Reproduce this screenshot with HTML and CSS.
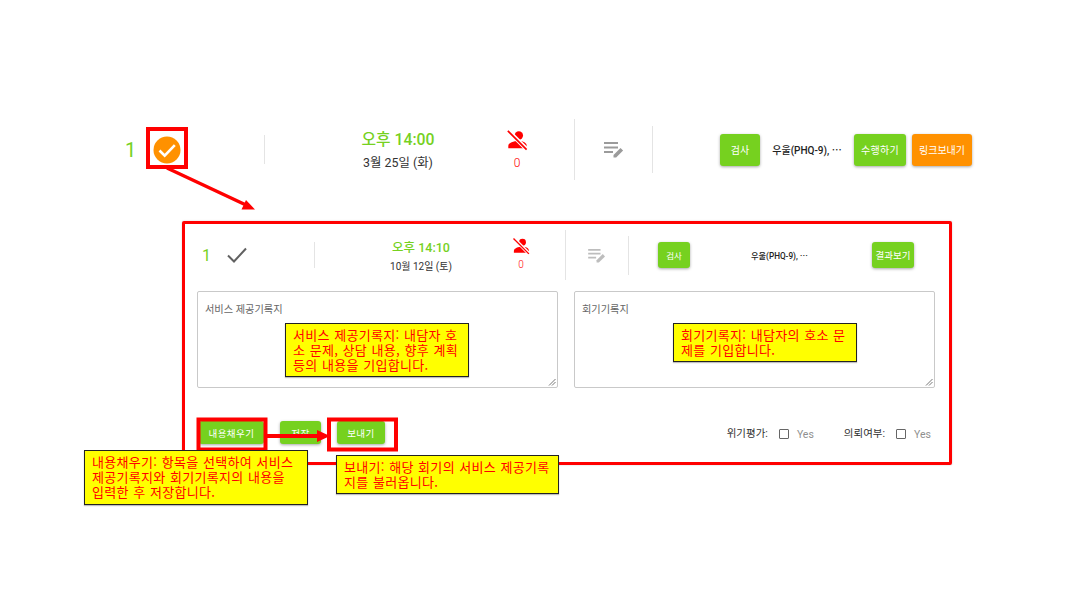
FILE: index.html
```html
<!DOCTYPE html>
<html lang="ko">
<head>
<meta charset="utf-8">
<title>회기 기록</title>
<link rel="stylesheet" href="styles.css">
</head>
<body>
<main class="slide">
  <section class="row row-top">
    <div class="cell-id">
      <span class="num">1</span>
      <svg class="status-icon" viewBox="0 0 28 28"><circle cx="14" cy="14" r="13.5" fill="#ff9100"/><path d="M6.5 14.5l5.2 5.2L21.8 9.2" fill="none" stroke="#fff" stroke-width="2.6"/></svg>
    </div>
    <div class="rule rule-short"></div>
    <div class="cell-time">
      <div class="when"><div class="time">오후 14:00</div><div class="date">3월 25일 (화)</div></div>
      <div class="absent">
        <svg class="absent-icon" viewBox="0 0 24 24"><circle cx="14" cy="7" r="4.6" fill="#f00"/><path d="M2.5 21v-2.5c0-3.6 6-5.5 11-5.5 5.5 0 9 2 9 5v3z" fill="#f00"/><path d="M2 1.500l20.500 20.500" stroke="#fff" stroke-width="4.500"/><path d="M2 2l20.500 20.500" stroke="#f00" stroke-width="1.800"/></svg>
        <div class="count">0</div>
      </div>
    </div>
    <div class="rule rule-tall"></div>
    <div class="cell-note">
      <svg class="note-icon" viewBox="0 0 20 17"><path d="M0 1h14v2H0zM0 5.500h14v2H0zM0 10h9v2H0z" fill="#9b9b9b"/><path d="M9.500 16.500v-2.600l7-7 2.600 2.600-7 7z" fill="#9b9b9b"/></svg>
    </div>
    <div class="rule rule-mid"></div>
    <div class="cell-actions">
      <button class="btn btn-test">검사</button>
      <span class="tests">우울(PHQ-9), ⋯</span>
      <button class="btn btn-run">수행하기</button>
      <button class="btn btn-link">링크보내기</button>
    </div>
  </section>

  <section class="card">
    <div class="row row-inner">
      <div class="cell-id">
        <span class="num">1</span>
        <svg class="plain-check" viewBox="0 0 20 16"><path d="M1 8.500l6 6L19 1.500" fill="none" stroke="#616161" stroke-width="2"/></svg>
      </div>
      <div class="rule rule-short"></div>
      <div class="cell-time">
        <div class="when"><div class="time">오후 14:10</div><div class="date">10월 12일 (토)</div></div>
        <div class="absent">
          <svg class="absent-icon" viewBox="0 0 24 24"><circle cx="14" cy="7" r="4.600" fill="#f00"/><path d="M2.500 21v-2.500c0-3.600 6-5.500 11-5.500 5.500 0 9 2 9 5v3z" fill="#f00"/><path d="M2 1.500l20.500 20.500" stroke="#fff" stroke-width="4.500"/><path d="M2 2l20.500 20.500" stroke="#f00" stroke-width="1.800"/></svg>
          <div class="count">0</div>
        </div>
      </div>
      <div class="rule rule-tall"></div>
      <div class="cell-note">
        <svg class="note-icon" viewBox="0 0 20 17"><path d="M0 1h14v2H0zM0 5.500h14v2H0zM0 10h9v2H0z" fill="#bdbdbd"/><path d="M9.500 16.500v-2.600l7-7 2.600 2.600-7 7z" fill="#bdbdbd"/></svg>
      </div>
      <div class="rule rule-mid"></div>
      <div class="cell-actions">
        <button class="btn btn-test">검사</button>
        <span class="tests">우울(PHQ-9), ⋯</span>
        <button class="btn btn-result">결과보기</button>
      </div>
    </div>

    <div class="records">
      <div class="record"><span class="record-label">서비스 제공기록지</span><svg class="grip" viewBox="0 0 8 8"><path d="M1 7.500L7.500 1M4 7.500L7.500 4" stroke="#777" fill="none"/></svg></div>
      <div class="record"><span class="record-label">회기기록지</span><svg class="grip" viewBox="0 0 8 8"><path d="M1 7.500L7.500 1M4 7.500L7.500 4" stroke="#777" fill="none"/></svg></div>
    </div>

    <div class="footer">
      <div class="footer-btns">
        <button class="btn btn-fill">내용채우기</button>
        <button class="btn btn-save">저장</button>
        <button class="btn btn-send">보내기</button>
      </div>
      <div class="footer-checks">
        <span class="check-label">위기평가:</span><span class="box"></span><span class="yes">Yes</span>
        <span class="check-label check-second">의뢰여부:</span><span class="box"></span><span class="yes">Yes</span>
      </div>
    </div>
  </section>

  <svg class="marks" viewBox="0 0 1080 608">
    <g fill="none" stroke="#f00" stroke-width="4">
      <rect x="148" y="129" width="38" height="38"/>
      <rect x="198.500" y="419.500" width="67" height="30"/>
      <rect x="329" y="419.500" width="67" height="30"/>
    </g>
    <path d="M167 168L246 205" stroke="#f00" stroke-width="3.500"/>
    <path d="M255 209.500L241.500 209.500L246 200z" fill="#f00"/>
    <path d="M267 436H320" stroke="#f00" stroke-width="4"/>
    <path d="M330 436L317 430V442z" fill="#f00"/>
  </svg>

  <p class="note note-service">서비스 제공기록지: 내담자 호소 문제, 상담 내용, 향후 계획 등의 내용을 기입합니다.</p>
  <p class="note note-session">회기기록지: 내담자의 호소 문제를 기입합니다.</p>
  <p class="note note-fill">내용채우기: 항목을 선택하여 서비스 제공기록지와 회기기록지의 내용을 입력한 후 저장합니다.</p>
  <p class="note note-send">보내기: 해당 회기의 서비스 제공기록지를 불러옵니다.</p>
</main>
</body>
</html>
```
FILE: styles.css
```css
* { box-sizing: border-box; }
html, body { margin: 0; padding: 0; background: #fff; }
body { font-family: "Roboto", "Noto Sans CJK KR", sans-serif; }
.slide { position: relative; width: 1080px; height: 608px; padding-top: 119px; overflow: hidden; }

.row { display: flex; align-items: center; }
.row-top { height: 61px; margin-left: 125px; margin-bottom: 41px; }
.row-inner { height: 50px; margin-left: 18px; margin-top: 6px; }

.rule { flex: none; width: 1px; background: #e4e4e4; }

.cell-id { display: flex; align-items: center; flex: none; }
.num { color: #76d11f; }
.cell-time { display: flex; align-items: center; flex: none; }
.when { text-align: center; flex: none; }
.absent { text-align: center; flex: none; }
.time { color: #76d11f; font-weight: 500; }
.date { color: #333; }
.count { color: #f00; font-weight: 300; }
.absent-icon { display: block; margin: 0 auto; }
.cell-note { display: flex; justify-content: center; align-items: center; flex: none; }
.note-icon { display: block; }
.cell-actions { display: flex; align-items: center; flex: none; }
.tests { display: block; color: #222; font-weight: 500; text-align: center; flex: none; white-space: nowrap; }

.btn {
  display: block; flex: none; border: 0; padding: 0; border-radius: 3px; color: #fff;
  background: #76d11f; font-family: inherit; white-space: nowrap;
  box-shadow: 0 1px 3px rgba(0,0,0,.35);
}

/* top row */
.row-top .cell-id { width: 139px; }
.row-top .num { width: 28px; font-size: 20px; }
.status-icon { width: 28px; height: 28px; display: block; }
.row-top .rule-short { height: 29px; }
.row-top .rule-tall { height: 61px; }
.row-top .rule-mid { height: 47px; }
.row-top .cell-time { width: 309px; padding-left: 33px; }
.row-top .when { width: 200px; padding-top: 4px; }
.row-top .time { font-size: 15.800px; line-height: 22px; }
.row-top .date { font-size: 12.400px; line-height: 22px; margin-top: 1px; }
.row-top .absent { width: 24px; margin-left: 7px; padding-top: 2px; }
.row-top .absent-icon { width: 22px; height: 22px; }
.row-top .count { font-size: 12px; line-height: 20px; margin-top: 2px; }
.row-top .cell-note { width: 77px; }
.row-top .note-icon { width: 20px; height: 17px; }
.row-top .cell-actions { padding-left: 67px; }
.row-top .btn { height: 32px; font-size: 10px; }
.row-top .btn-test { width: 40px; }
.row-top .tests { width: 94px; font-size: 10px; }
.btn-run { width: 52px; letter-spacing: .3px; }
.btn-link { width: 60px; margin-left: 6px; background: #ff9100; }

/* card */
.card { width: 770px; height: 244px; margin-left: 182px; border: 3px solid #f00; border-radius: 2px; background: #fff; box-shadow: 0 0 2px rgba(0,0,0,.2); }
.row-inner .cell-id { width: 111px; }
.row-inner .num { width: 24px; font-size: 16px; margin-left: -1px; margin-right: 1px; }
.plain-check { width: 20px; height: 16px; display: block; }
.row-inner .rule-short { height: 26px; }
.row-inner .rule-tall { height: 50px; }
.row-inner .rule-mid { height: 39px; }
.row-inner .cell-time { width: 250px; padding-left: 26px; }
.row-inner .when { width: 160px; padding-top: 3px; }
.row-inner .time { font-size: 12.500px; line-height: 18px; }
.row-inner .date { font-size: 10px; line-height: 16px; margin-top: 2px; }
.row-inner .absent { width: 18px; margin-left: 11px; }
.row-inner .absent-icon { width: 18px; height: 18px; }
.row-inner .count { font-size: 10px; line-height: 16px; margin-top: 2px; }
.row-inner .cell-note { width: 62px; }
.row-inner .note-icon { width: 18px; height: 15px; }
.row-inner .cell-actions { padding-left: 29px; }
.row-inner .btn { height: 26px; font-size: 8.500px; }
.row-inner .btn-test { width: 32px; }
.row-inner .tests { width: 179px; font-size: 8.200px; margin-right: 3px; }
.row-inner .btn-result { width: 42px; font-size: 9.500px; }

.records { display: flex; gap: 16px; margin: 11px 0 0 12px; }
.record { position: relative; width: 361px; height: 97px; padding: 11px 7px; border: 1px solid #c9c9c9; border-radius: 2px; background: #fff; }
.record-label { font-size: 10.200px; line-height: 14px; color: #666; display: block; }
.grip { position: absolute; right: 1px; bottom: 1px; width: 8px; height: 8px; }

.footer { display: flex; align-items: center; margin: 33px 0 0 14px; height: 23px; }
.footer-btns { display: flex; gap: 16px; }
.footer .btn { height: 23px; font-size: 9.500px; letter-spacing: .5px; }
.btn-fill { width: 65px; }
.btn-save { width: 41px; }
.btn-send { width: 48px; }
.footer-checks { display: flex; align-items: center; margin-left: auto; margin-right: 18px; font-size: 10.500px; }
.check-label { color: #333; margin-top: -1px; }
.check-second { margin-left: 30px; }
.box { width: 10px; height: 10px; border: 1px solid #666; border-radius: 1px; margin: 2px 8px 0 11px; }
.yes { color: #8f8f8f; margin-top: 4px; }

/* overlays */
.marks { position: absolute; left: 0; top: 0; width: 1080px; height: 608px; }
.note {
  position: absolute; margin: 0; padding: 3px 7px; background: #ff0; border: 1px solid #222;
  color: #f00; font-family: "Noto Sans CJK KR", sans-serif; font-size: 13px; line-height: 15px; word-break: break-all; box-shadow: 0 1px 1px rgba(0,0,0,.25);
  letter-spacing: .3px; word-spacing: .5px;
}
.note-service { left: 285px; top: 323px; width: 184px; height: 54px; }
.note-session { left: 673px; top: 323px; width: 184px; height: 39px; }
.note-fill { left: 84px; top: 450px; width: 224px; height: 55px; }
.note-send { left: 336px; top: 455px; width: 223px; height: 39px; }
```
